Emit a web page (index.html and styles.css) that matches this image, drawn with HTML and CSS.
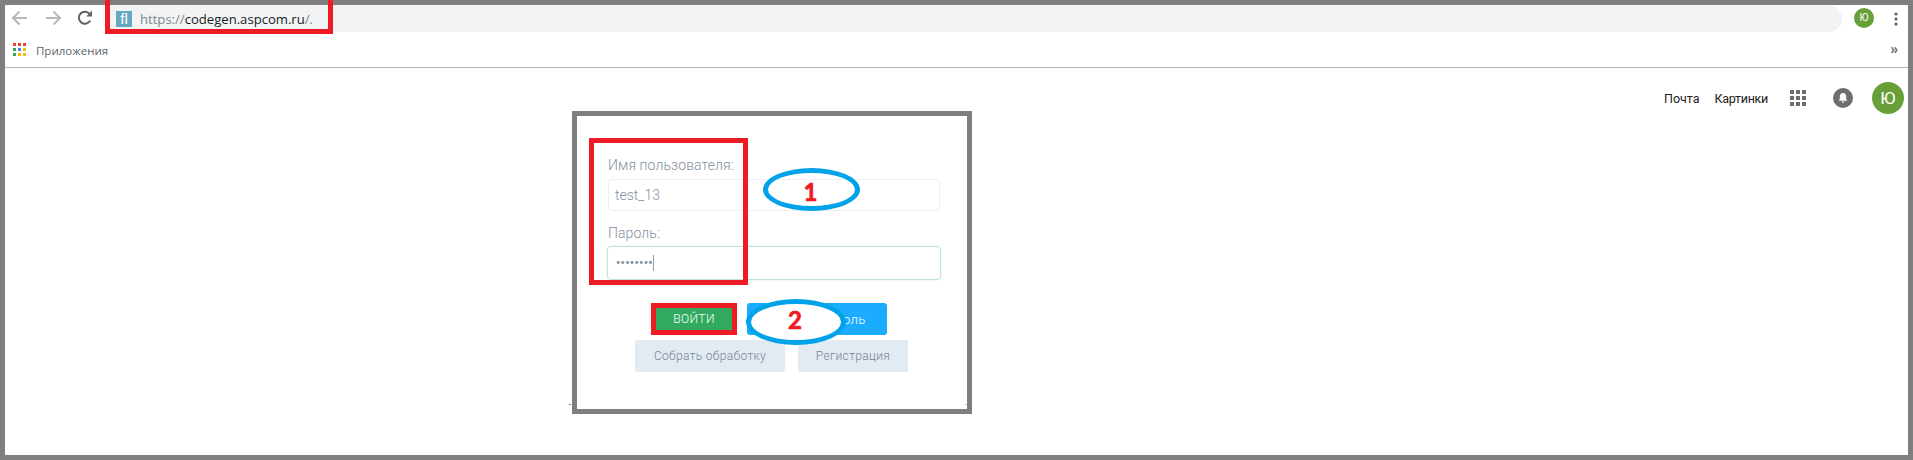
FILE: index.html
```html
<!DOCTYPE html>
<html lang="ru">
<head>
<meta charset="utf-8">
<title>Вход</title>
<link rel="stylesheet" href="styles.css">
</head>
<body>
<div class="frame">
  <header class="toolbar">
    <svg class="nav-icon" width="16" height="16" viewBox="0 0 16 16"><path d="M16 8H2M8.500 1.500 2 8l6.500 6.500" class="arrow"/></svg>
    <svg class="nav-icon fwd" width="16" height="16" viewBox="0 0 16 16"><path d="M1 8h14M8.500 1.500 15 8l-6.500 6.500" class="arrow"/></svg>
    <svg class="nav-icon reload" width="16" height="16" viewBox="0 0 16 16"><path d="M13.200 10.500A6 6 0 1 1 12.600 4" class="reload-arc"/><path d="M9.200 6.400H15V.6z" class="reload-head"/></svg>
    <div class="omnibox">
      <span class="favicon">fl</span>
      <span class="url"><span class="dim">https://</span>codegen.aspcom.ru<span class="dim">/.</span></span>
    </div>
    <span class="profile-small">Ю</span>
    <svg class="kebab" width="4" height="14" viewBox="0 0 4 14"><circle cx="2" cy="2" r="1.600"/><circle cx="2" cy="7" r="1.600"/><circle cx="2" cy="12" r="1.600"/></svg>
  </header>
  <nav class="bookmarks">
    <svg class="apps" width="13" height="13" viewBox="0 0 13 13">
      <rect class="r" x="0" y="0" width="3" height="3"/><rect class="r" x="5" y="0" width="3" height="3"/><rect class="r" x="10" y="0" width="3" height="3"/>
      <rect class="g" x="0" y="5" width="3" height="3"/><rect class="b" x="5" y="5" width="3" height="3"/><rect class="y" x="10" y="5" width="3" height="3"/>
      <rect class="g" x="0" y="10" width="3" height="3"/><rect class="y" x="5" y="10" width="3" height="3"/><rect class="y" x="10" y="10" width="3" height="3"/>
    </svg>
    <span class="bm-label">Приложения</span>
    <span class="more">»</span>
  </nav>
  <main class="page">
    <div class="top-links">
      <a class="link">Почта</a>
      <a class="link images">Картинки</a>
      <svg class="grid" width="16" height="16" viewBox="0 0 16 16">
        <rect width="4" height="4"/><rect x="6" width="4" height="4"/><rect x="12" width="4" height="4"/>
        <rect y="6" width="4" height="4"/><rect x="6" y="6" width="4" height="4"/><rect x="12" y="6" width="4" height="4"/>
        <rect y="12" width="4" height="4"/><rect x="6" y="12" width="4" height="4"/><rect x="12" y="12" width="4" height="4"/>
      </svg>
      <svg class="bell" width="20" height="20" viewBox="0 0 20 20"><circle cx="10" cy="10" r="10" class="bell-bg"/><path d="M10 5c-2.200 0-3.200 1.700-3.200 3.600v2.400L5.800 12.700h8.400L13.200 11V8.600C13.200 6.700 12.200 5 10 5zM8.700 13.500a1.300 1.300 0 0 0 2.600 0z" class="bell-fg"/></svg>
      <span class="profile">Ю</span>
    </div>
    <section class="card">
      <label class="field-label">Имя пользователя:</label>
      <div class="input">test_13</div>
      <label class="field-label second">Пароль:</label>
      <div class="input focused"><span class="dots">••••••••</span><span class="caret"></span></div>
      <div class="btn-row first">
        <button class="btn green">ВОЙТИ</button>
        <button class="btn blue">Пароль</button>
      </div>
      <div class="btn-row">
        <button class="btn light build">Собрать обработку</button>
        <button class="btn light reg">Регистрация</button>
      </div>
    </section>
  </main>
  <div class="note red-url"></div>
  <div class="note red-fields"></div>
  <div class="note red-login"></div>
  <div class="note oval oval-1">1</div>
  <div class="note oval oval-2">2</div>
</div>
</body>
</html>
```
FILE: styles.css
```css
* { box-sizing: border-box; }
html, body { margin: 0; height: 100%; background: #fff; overflow: hidden; }
.frame {
  position: relative;
  width: 1913px;
  height: 460px;
  border: 5px solid #7f7f7f;
  font-family: "Roboto", "Liberation Sans", sans-serif;
  display: flex;
  flex-direction: column;
}
.toolbar { height: 33px; display: flex; align-items: flex-start; padding-left: 6px; flex: none; }
.nav-icon { margin-top: 5px; flex: none; }
.fwd { margin-left: 18px; }
.reload { margin-left: 16px; }
.arrow { fill: none; stroke: #b6b8ba; stroke-width: 2; }
.reload-arc { fill: none; stroke: #5f6368; stroke-width: 2; }
.reload-head { fill: #5f6368; }
.omnibox {
  margin-left: 12px;
  width: 1737px;
  height: 27px;
  background: #f1f3f4;
  border-radius: 0 14px 14px 0;
  display: flex;
  align-items: center;
  padding-left: 11px;
  flex: none;
}
.favicon {
  width: 16px; height: 16px; background: #66a9bd; color: #fff;
  font: 15px/16px "Liberation Sans", sans-serif; text-align: center; flex: none;
}
.url { margin-left: 8px; font: 13.100px "Open Sans", sans-serif; color: #202124; white-space: nowrap; }
.dim { color: #80868b; }
.profile-small {
  margin: 3px 0 0 12px; width: 20px; height: 20px; border-radius: 50%;
  background: #689f38; color: #fff; font-size: 10px; line-height: 20px; text-align: center; flex: none;
}
.kebab { margin: 7px 0 0 20px; fill: #5f6368; flex: none; }
.bookmarks { height: 29px; display: flex; align-items: center; padding: 0 10px 0 8px; flex: none; }
.apps { flex: none; margin-top: -6px; }
.r { fill: #ea4335; } .g { fill: #34a853; } .b { fill: #4285f4; } .y { fill: #fbbc05; }
.bm-label { margin-left: 10px; font: 11.500px "Open Sans", sans-serif; color: #5f6368; margin-top: -5px; }
.more { margin-left: auto; font: bold 14px "Liberation Sans", sans-serif; color: #70757a; margin-top: -8px; }
.page { border-top: 1px solid #b4b4b4; flex: 1; }
.top-links { height: 46px; display: flex; align-items: center; padding: 14px 0 0 1659px; }
.link { font-size: 12.500px; color: #222; }
.images { margin-left: 15px; letter-spacing: -.3px; }
.grid { margin-left: 22px; fill: #6e6e6e; flex: none; }
.bell { margin-left: 27px; flex: none; }
.bell-bg { fill: #6e6e6e; }
.bell-fg { fill: #fff; }
.profile {
  margin-left: 19px; width: 32px; height: 32px; border-radius: 50%;
  background: #689f38; color: #fff; font-size: 17px; line-height: 32px; text-align: center; flex: none;
}
.card {
  position: relative;
  width: 400px;
  height: 303px;
  margin: -3px 0 0 567px;
  border: 5px solid #7f7f7f;
  padding: 39px 31px 0 31px;
  color: #818f9f;
  font-weight: 300;
}
.card::before, .card::after { content: ""; position: absolute; top: 288px; height: 1px; }
.card::before { left: -8px; width: 2px; background: #7f7f7f; }
.card::after { left: 388px; width: 2px; background: #c0c0c0; }
.field-label { display: block; font-size: 14px; line-height: 20px; letter-spacing: .1px; }
.second { margin-top: 12px; }
.input {
  margin-top: 4px;
  height: 32px;
  width: 332px;
  border: 1px solid #eeeff1;
  border-radius: 4px;
  padding-left: 6px;
  font-size: 14px;
  line-height: 30px;
}
.focused {
  width: 334px; height: 34px; margin-left: -1px; margin-top: 3px;
  border-color: #bfe6cd; box-shadow: 0 0 2px #cdeeda;
  display: flex; align-items: center;
  padding-left: 8px;
}
.dots { font-size: 12px; font-weight: 700; letter-spacing: .3px; }
.caret { width: 1px; height: 16px; background: #8f9cab; }
.btn-row { display: flex; }
.first { margin: 23px 0 0 48px; }
.btn-row + .btn-row { margin: 5px 0 0 27px; }
.btn {
  border: 0; border-radius: 3px; height: 32px; font-family: inherit; font-weight: 300;
  font-size: 12px; letter-spacing: .4px; padding: 0;
}
.green { width: 76px; height: 22px; margin: 5px 15px 0 0; border-radius: 0; background: #31aa5f; color: #fff; }
.blue { width: 140px; background: #1cacff; color: #fff; padding-left: 50px; font-size: 13px; }
.light { background: #e2eaf2; color: #76849a; letter-spacing: .35px; }
.build { width: 150px; }
.reg { width: 110px; margin-left: 13px; }
.note { position: absolute; pointer-events: none; }
.red-url { left: 100px; top: -5px; width: 228px; height: 34px; border: 5px solid #ed1c24; border-top: 0; }
.red-fields { left: 584px; top: 133px; width: 159px; height: 147px; border: 5px solid #ed1c24; }
.red-login { left: 646px; top: 298px; width: 86px; height: 32px; border: 5px solid #ed1c24; }
.oval {
  border: 5px solid #00a2e8;
  border-radius: 50%;
  display: flex; align-items: center; justify-content: center;
  color: #ed1c24; font: bold 24px "Lato", sans-serif;
  -webkit-text-stroke: .7px #ed1c24;
}
.oval-1 { left: 758px; top: 163px; width: 97px; height: 43px; padding: 3px 2px 0 0; }
.oval-2 { left: 741px; top: 294px; width: 100px; height: 46px; background: #fff; padding: 0 2px 5px 0; }
```
